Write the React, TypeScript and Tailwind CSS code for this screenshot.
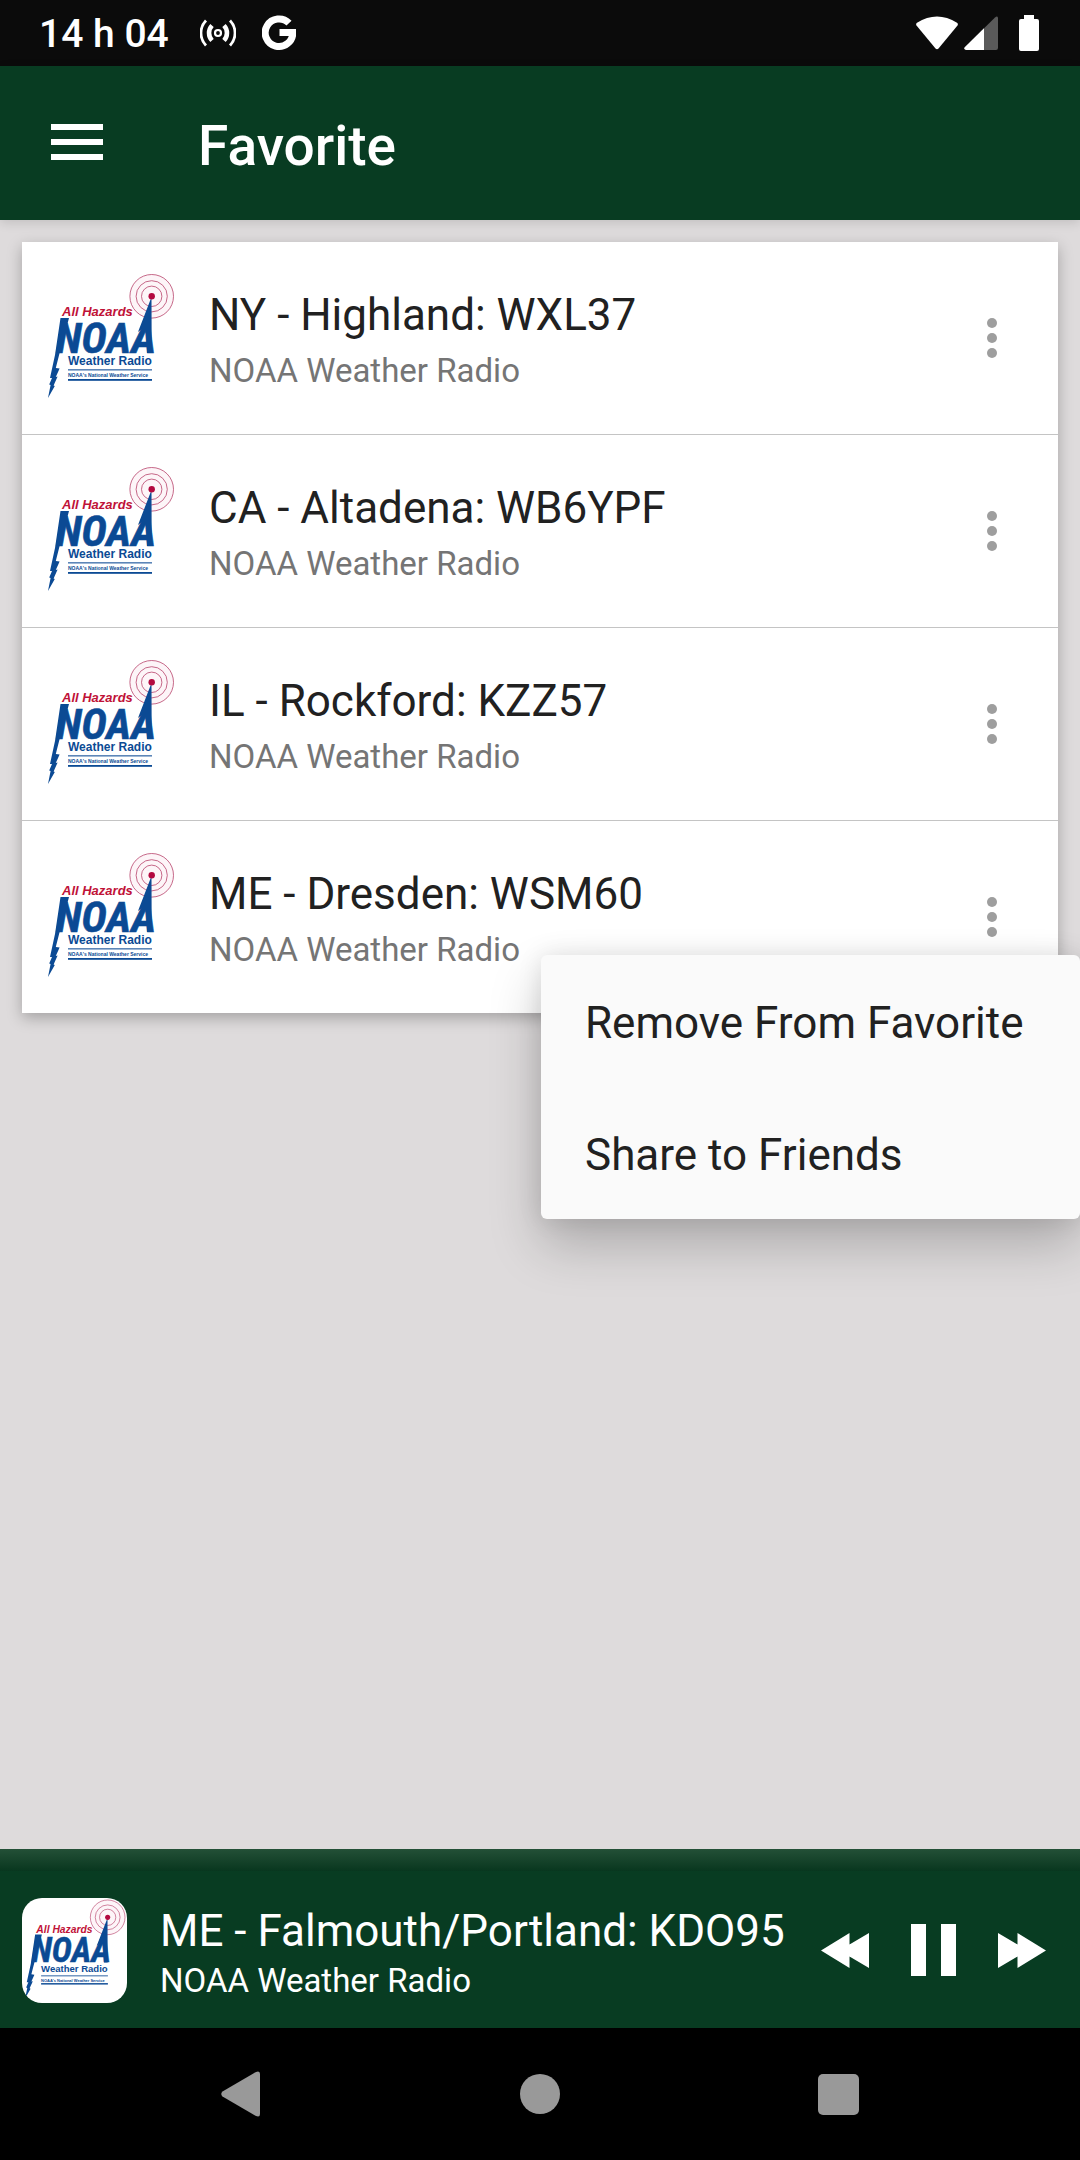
import { useState } from 'react';

type Station = {
  id: string;
  name: string;
  network: string;
};

const favorites: Station[] = [
  { id: 'wxl37', name: 'NY - Highland: WXL37', network: 'NOAA Weather Radio' },
  { id: 'wb6ypf', name: 'CA - Altadena: WB6YPF', network: 'NOAA Weather Radio' },
  { id: 'kzz57', name: 'IL - Rockford: KZZ57', network: 'NOAA Weather Radio' },
  { id: 'wsm60', name: 'ME - Dresden: WSM60', network: 'NOAA Weather Radio' },
];

function StationLogo({ className }: { className: string }) {
  return (
    <svg
      viewBox="0 0 132 132"
      className={className}
      role="img"
      aria-label="NOAA Weather Radio"
      fontFamily="'Liberation Sans', Arial, sans-serif"
      fontWeight="700"
    >
      <rect width="132" height="132" fill="#fff" />
      <g fill="none" stroke="#b8436b" strokeWidth="0.8">
        <circle cx="107.7" cy="24.3" r="21.8" fill="#fdf5f8" />
        <circle cx="107.7" cy="24.3" r="15.6" />
        <circle cx="107.7" cy="24.3" r="10.2" />
      </g>
      <g fill="#0b4a94">
        {/* antenna mast */}
        <path d="M107.5 25 L107.7 81 L103 81 L102 54 L94 60 Z" />
        {/* lightning bolt */}
        <path d="M16.5 46 L25 46 L15.6 81 L11.8 96 L15.6 96.5 L11.8 105 L13.6 104.5 L9.6 113.5 L10.8 114 L4 126 L6.6 113 L5.2 112.5 L8 106 L6 106 L11 83 Z" />
        <text
          x="12"
          y="81"
          fontSize="43"
          fontStyle="italic"
          fontFamily="'Liberation Sans Narrow', 'Roboto Condensed', Roboto, sans-serif"
          stroke="#0b4a94"
          strokeWidth="0.6"
        >
          NOAA
        </text>
        <text x="24" y="93" fontSize="12">
          Weather Radio
        </text>
        <rect x="24" y="97" width="84" height="1.6" fill="#5d86b8" />
        <text x="24" y="105" fontSize="5">
          NOAA's National Weather Service
        </text>
        <rect x="24" y="107" width="84" height="1.8" />
      </g>
      <text x="18" y="44" fontSize="13" fontStyle="italic" fill="#bf1238">
        All Hazards
      </text>
      <circle cx="107.7" cy="24.3" r="3.2" fill="#b3093f" />
    </svg>
  );
}

function StatusBar() {
  return (
    <div className="flex h-[66px] items-center bg-[#0b0b0b] pr-[41px] pl-[39px] text-white">
      <span className="pt-0.5 text-[39px] leading-[48px] font-medium">14 h 04</span>

      <svg viewBox="0 0 36 28" className="ml-[31px] h-7 w-9" fill="none" stroke="currentColor" aria-hidden="true">
        <circle cx="18" cy="14" r="3" strokeWidth="2.2" />
        <path d="M12 6.500 A11 11 0 0 0 12 21.500 M24 6.500 A11 11 0 0 1 24 21.500" strokeWidth="4.600" />
        <path d="M6 1.500 A18 18 0 0 0 6 26.500 M30 1.500 A18 18 0 0 1 30 26.500" strokeWidth="2.800" />
      </svg>
      <svg viewBox="0 0 34 36" className="ml-[26px] h-9 w-[34px]" fill="none" stroke="currentColor" aria-hidden="true">
        <path d="M27 8.200 A13.800 13.800 0 1 0 30.800 17.500 H17.500" strokeWidth="7" />
      </svg>

      <div className="ml-auto flex items-center">
        <svg viewBox="0 0 42 34" className="h-[34px] w-[42px]" fill="currentColor" aria-hidden="true">
          <path d="M0.500 9.500 Q-0.500 8 1 6.800 Q21 -6 41 6.800 Q42.500 8 41.500 9.500 L22.500 32.600 Q21 34 19.500 32.600 Z" />
        </svg>
        <svg viewBox="0 0 34 34" className="ml-1.5 h-[34px] w-[34px]" aria-hidden="true">
          <path d="M31 1.500 Q33.500 -0.500 34 2 V32 Q34 34 32 34 H2 Q-1 33 1 31 Z" fill="#5a5a5a" />
          <path d="M20 12.200 V34 H2 Q-1 33 1 31 Z" fill="#fff" />
        </svg>
        <svg viewBox="0 0 20 36" className="ml-[21px] h-9 w-5" fill="currentColor" aria-hidden="true">
          <path d="M5 0 H15 V4 H18 Q20 4 20 6 V34 Q20 36 18 36 H2 Q0 36 0 34 V6 Q0 4 2 4 H5 Z" />
        </svg>
      </div>
    </div>
  );
}

function StationMenu() {
  return (
    <div
      role="menu"
      className="absolute top-[134px] -right-[22px] z-10 flex w-[539px] flex-col rounded-md bg-[#fafafa] shadow-[0_26px_52px_rgba(0,0,0,0.22),0_0_24px_rgba(0,0,0,0.1)]"
    >
      <button role="menuitem" className="h-[132px] px-11 pt-1 text-left text-[44px] text-[#212121]">
        Remove From Favorite
      </button>
      <button role="menuitem" className="h-[132px] px-11 pt-1 text-left text-[44px] text-[#212121]">
        Share to Friends
      </button>
    </div>
  );
}

export default function App() {
  const [openMenu, setOpenMenu] = useState<string | null>('wsm60');
  const [playing, setPlaying] = useState(true);

  return (
    <div className="flex min-h-screen flex-col overflow-x-hidden bg-[#dedbdc] font-[Roboto,sans-serif]">
      <StatusBar />

      <header className="z-10 flex h-[154px] items-center bg-[#083c22] pl-[51px] text-white shadow-[0_3px_10px_rgba(0,0,0,0.12)]">
        <button aria-label="Open menu" className="flex h-14 w-[52px] flex-col items-center justify-center gap-[9px] pb-0.5">
          <span className="h-1.5 w-full bg-white" />
          <span className="h-1.5 w-full bg-white" />
          <span className="h-1.5 w-full bg-white" />
        </button>
        <h1 className="ml-[95px] pt-1.5 text-[55px] leading-[64px] font-medium">Favorite</h1>
      </header>

      <main className="flex-1 p-[22px]">
        <ul className="bg-white shadow-[0_5px_14px_rgba(0,0,0,0.26)]">
          {favorites.map((station) => (
            <li
              key={station.id}
              className="relative flex h-[193px] items-center border-b border-[#c4c4c4] px-[22px] last:h-[192px] last:border-b-0"
            >
              <StationLogo className="h-[132px] w-[132px] shrink-0" />
              <div className="ml-[33px] min-w-0 flex-1 pt-0.5">
                <p className="truncate text-[44px] leading-[52px] text-[#212121]">{station.name}</p>
                <p className="mt-3 text-[33px] leading-9 text-[#757575]">{station.network}</p>
              </div>
              <button
                aria-label={`Options for ${station.name}`}
                aria-expanded={openMenu === station.id}
                onClick={() => setOpenMenu(openMenu === station.id ? null : station.id)}
                className="flex h-[88px] w-[88px] flex-col items-center justify-center gap-[5px]"
              >
                <span className="h-2.5 w-2.5 rounded-full bg-[#9e9e9e]" />
                <span className="h-2.5 w-2.5 rounded-full bg-[#9e9e9e]" />
                <span className="h-2.5 w-2.5 rounded-full bg-[#9e9e9e]" />
              </button>
              {openMenu === station.id && <StationMenu />}
            </li>
          ))}
        </ul>
      </main>

      <footer>
        <div className="h-[22px] bg-linear-to-b from-[#235037] to-[#08371f]" />
        <div className="flex h-[157px] items-center bg-[#083c22] pt-px pr-[34px] pl-[22px] text-white">
          <StationLogo className="h-[105px] w-[105px] shrink-0 rounded-[20px]" />
          <div className="ml-[33px] min-w-0 flex-1 pt-1.5">
            <p className="truncate text-[44px] leading-[52px]">ME - Falmouth/Portland: KDO95</p>
            <p className="mt-1 text-[33px] leading-10">NOAA Weather Radio</p>
          </div>
          <div className="ml-8 flex shrink-0 items-center gap-[42px]">
            <button aria-label="Previous station">
              <svg viewBox="0 0 48 35" className="h-[35px] w-12" fill="currentColor" aria-hidden="true">
                <path d="M0 17.500 L28.500 0 V11.500 L48 0 V35 L28.500 23.500 V35 Z" />
              </svg>
            </button>
            <button aria-label={playing ? 'Pause' : 'Play'} onClick={() => setPlaying(!playing)}>
              <svg viewBox="0 0 45 52" className="h-[52px] w-[45px]" fill="currentColor" aria-hidden="true">
                {playing ? <path d="M0 0 H15 V52 H0 Z M30 0 H45 V52 H30 Z" /> : <path d="M2 0 L45 26 L2 52 Z" />}
              </svg>
            </button>
            <button aria-label="Next station">
              <svg viewBox="0 0 48 35" className="h-[35px] w-12" fill="currentColor" aria-hidden="true">
                <path d="M48 17.500 L19.500 0 V11.500 L0 0 V35 L19.500 23.500 V35 Z" />
              </svg>
            </button>
          </div>
        </div>
      </footer>

      <nav className="flex h-[132px] items-center justify-between bg-black px-[221px] text-[#999]">
        <button aria-label="Back">
          <svg viewBox="0 0 40 46" className="h-[46px] w-10" fill="currentColor" aria-hidden="true">
            <path d="M1.500 20.500 L34.500 1.200 Q39 -1 39 3 V43 Q39 47 34.500 44.800 L1.500 25.500 Q-1 23 1.500 20.500 Z" />
          </svg>
        </button>
        <button aria-label="Home" className="h-10 w-10 rounded-full bg-[#999]" />
        <button aria-label="Recent apps" className="h-[41px] w-[41px] rounded-[5px] bg-[#999]" />
      </nav>
    </div>
  );
}
